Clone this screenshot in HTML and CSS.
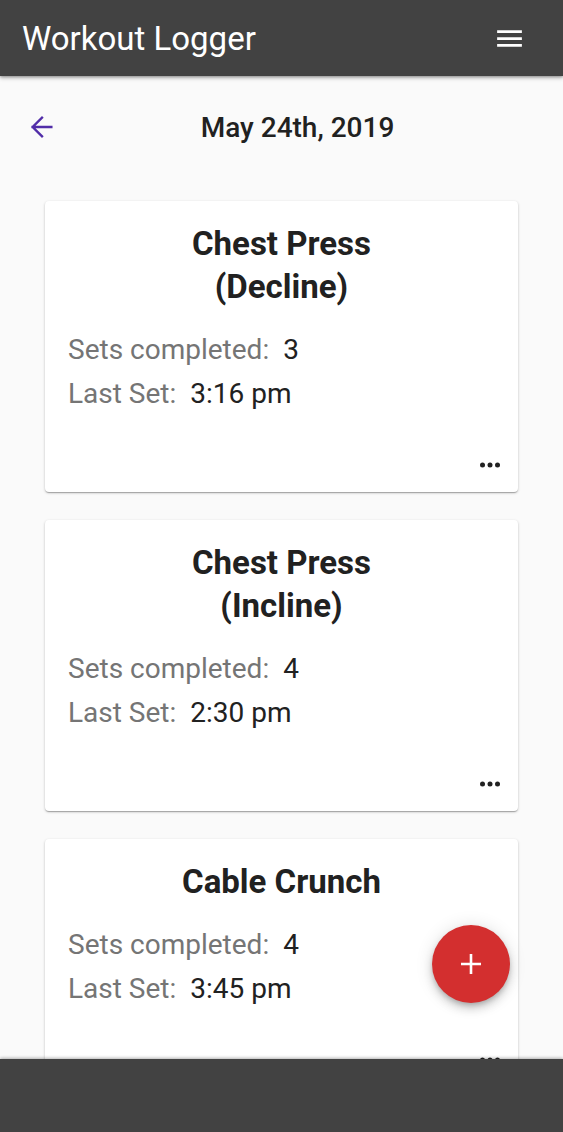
FILE: index.html
```html
<!DOCTYPE html>
<html lang="en">
<head>
<meta charset="utf-8">
<title>Workout Logger</title>
<link rel="stylesheet" href="styles.css">
</head>
<body>
<div class="app">
  <header class="topbar">
    <h1 class="brand">Workout Logger</h1>
    <button class="menu-btn" aria-label="Menu">
      <svg width="33" height="33" viewBox="0 0 24 24"><path fill="#fff" d="M3 18h18v-2H3v2zm0-5h18v-2H3v2zm0-7v2h18V6H3z"/></svg>
    </button>
  </header>

  <main class="content">
    <div class="date-row">
      <button class="back-btn" aria-label="Back">
        <svg width="32" height="32" viewBox="0 0 24 24"><path fill="none" stroke="#512da8" stroke-width="1.8" stroke-linecap="square" d="M5 12h14M12 5l-7 7 7 7"/></svg>
      </button>
      <h2 class="date">May 24th, 2019</h2>
    </div>

    <div class="cards">
      <section class="card">
        <h3 class="card-title">Chest Press<br>(Decline)</h3>
        <div class="stats">
          <p class="stat"><span class="label">Sets completed:</span><span class="value">3</span></p>
          <p class="stat"><span class="label">Last Set:</span><span class="value">3:16 pm</span></p>
        </div>
        <div class="card-footer">
          <svg width="30" height="30" viewBox="0 0 24 24"><circle cx="6" cy="12" r="2"/><circle cx="12" cy="12" r="2"/><circle cx="18" cy="12" r="2"/></svg>
        </div>
      </section>

      <section class="card">
        <h3 class="card-title">Chest Press<br>(Incline)</h3>
        <div class="stats">
          <p class="stat"><span class="label">Sets completed:</span><span class="value">4</span></p>
          <p class="stat"><span class="label">Last Set:</span><span class="value">2:30 pm</span></p>
        </div>
        <div class="card-footer">
          <svg width="30" height="30" viewBox="0 0 24 24"><circle cx="6" cy="12" r="2"/><circle cx="12" cy="12" r="2"/><circle cx="18" cy="12" r="2"/></svg>
        </div>
      </section>

      <section class="card">
        <h3 class="card-title">Cable Crunch</h3>
        <div class="stats">
          <p class="stat"><span class="label">Sets completed:</span><span class="value">4</span></p>
          <p class="stat"><span class="label">Last Set:</span><span class="value">3:45 pm</span></p>
        </div>
        <div class="card-footer">
          <svg width="30" height="30" viewBox="0 0 24 24"><circle cx="6" cy="12" r="2"/><circle cx="12" cy="12" r="2"/><circle cx="18" cy="12" r="2"/></svg>
        </div>
      </section>
    </div>
  </main>

  <footer class="bottombar"></footer>

  <button class="fab" aria-label="Add">
    <svg width="22" height="22" viewBox="0 0 22 22"><path stroke="#fff" stroke-width="2.6" d="M11 1v20M1 11h20"/></svg>
  </button>
</div>
</body>
</html>
```

FILE: styles.css
```css
* {
  box-sizing: border-box;
}

html,
body {
  margin: 0;
  padding: 0;
  height: 100%;
  overflow: hidden;
}

body {
  background: #fafafa;
  font-family: Roboto, "Liberation Sans", Arial, sans-serif;
  color: #212121;
}

.app {
  position: relative;
  display: flex;
  flex-direction: column;
  height: 100vh;
}

.topbar {
  flex: 0 0 76px;
  display: flex;
  align-items: center;
  justify-content: space-between;
  padding: 0 37px 0 22px;
  background: #424242;
  box-shadow: 0 2px 4px rgba(0, 0, 0, 0.28), 0 1px 2px rgba(0, 0, 0, 0.2);
  position: relative;
  z-index: 2;
}

.brand {
  margin: 0;
  font-size: 33px;
  font-weight: 400;
  color: #fff;
  letter-spacing: 0;
  line-height: 1;
}

.menu-btn,
.back-btn {
  border: 0;
  background: none;
  padding: 0;
  display: flex;
  cursor: pointer;
}

.content {
  flex: 1 1 auto;
  overflow: hidden;
  padding-top: 26px;
}

.date-row {
  height: 50px;
  display: flex;
  align-items: center;
  padding: 0 26px;
}

.date {
  flex: 1;
  margin: 0;
  text-align: center;
  font-size: 28px;
  font-weight: 500;
  color: #212121;
}

.cards {
  margin-top: 49px;
  padding: 0 45px;
  display: flex;
  flex-direction: column;
  gap: 28px;
}

.card {
  background: #fff;
  border-radius: 4px;
  box-shadow: 0 1px 3px rgba(0, 0, 0, 0.2), 0 1px 1px rgba(0, 0, 0, 0.14), 0 2px 1px -1px rgba(0, 0, 0, 0.12);
  padding: 21px 13px 3px 23px;
}

.card-title {
  margin: 0;
  text-align: center;
  font-size: 33px;
  font-weight: 700;
  line-height: 43px;
  color: #212121;
  padding-right: 10px;
}

.stats {
  margin-top: 20px;
}

.stat {
  margin: 0;
  font-size: 28px;
  line-height: 44px;
}

.label {
  color: #757575;
}

.value {
  color: #212121;
  margin-left: 14px;
}

.card-footer {
  margin-top: 25px;
  height: 48px;
  display: flex;
  align-items: center;
  justify-content: flex-end;
}

.card-footer svg {
  fill: #212121;
}

.bottombar {
  flex: 0 0 73px;
  background: #424242;
  box-shadow: 0 -1px 3px rgba(0, 0, 0, 0.3);
  position: relative;
  z-index: 2;
}

.fab {
  position: absolute;
  right: 53px;
  bottom: 129px;
  width: 78px;
  height: 78px;
  border-radius: 50%;
  border: 0;
  background: #d32f2f;
  display: flex;
  align-items: center;
  justify-content: center;
  box-shadow: 0 3px 5px -1px rgba(0, 0, 0, 0.2), 0 6px 10px 0 rgba(0, 0, 0, 0.14), 0 1px 18px 0 rgba(0, 0, 0, 0.12);
  z-index: 3;
  cursor: pointer;
}
```
